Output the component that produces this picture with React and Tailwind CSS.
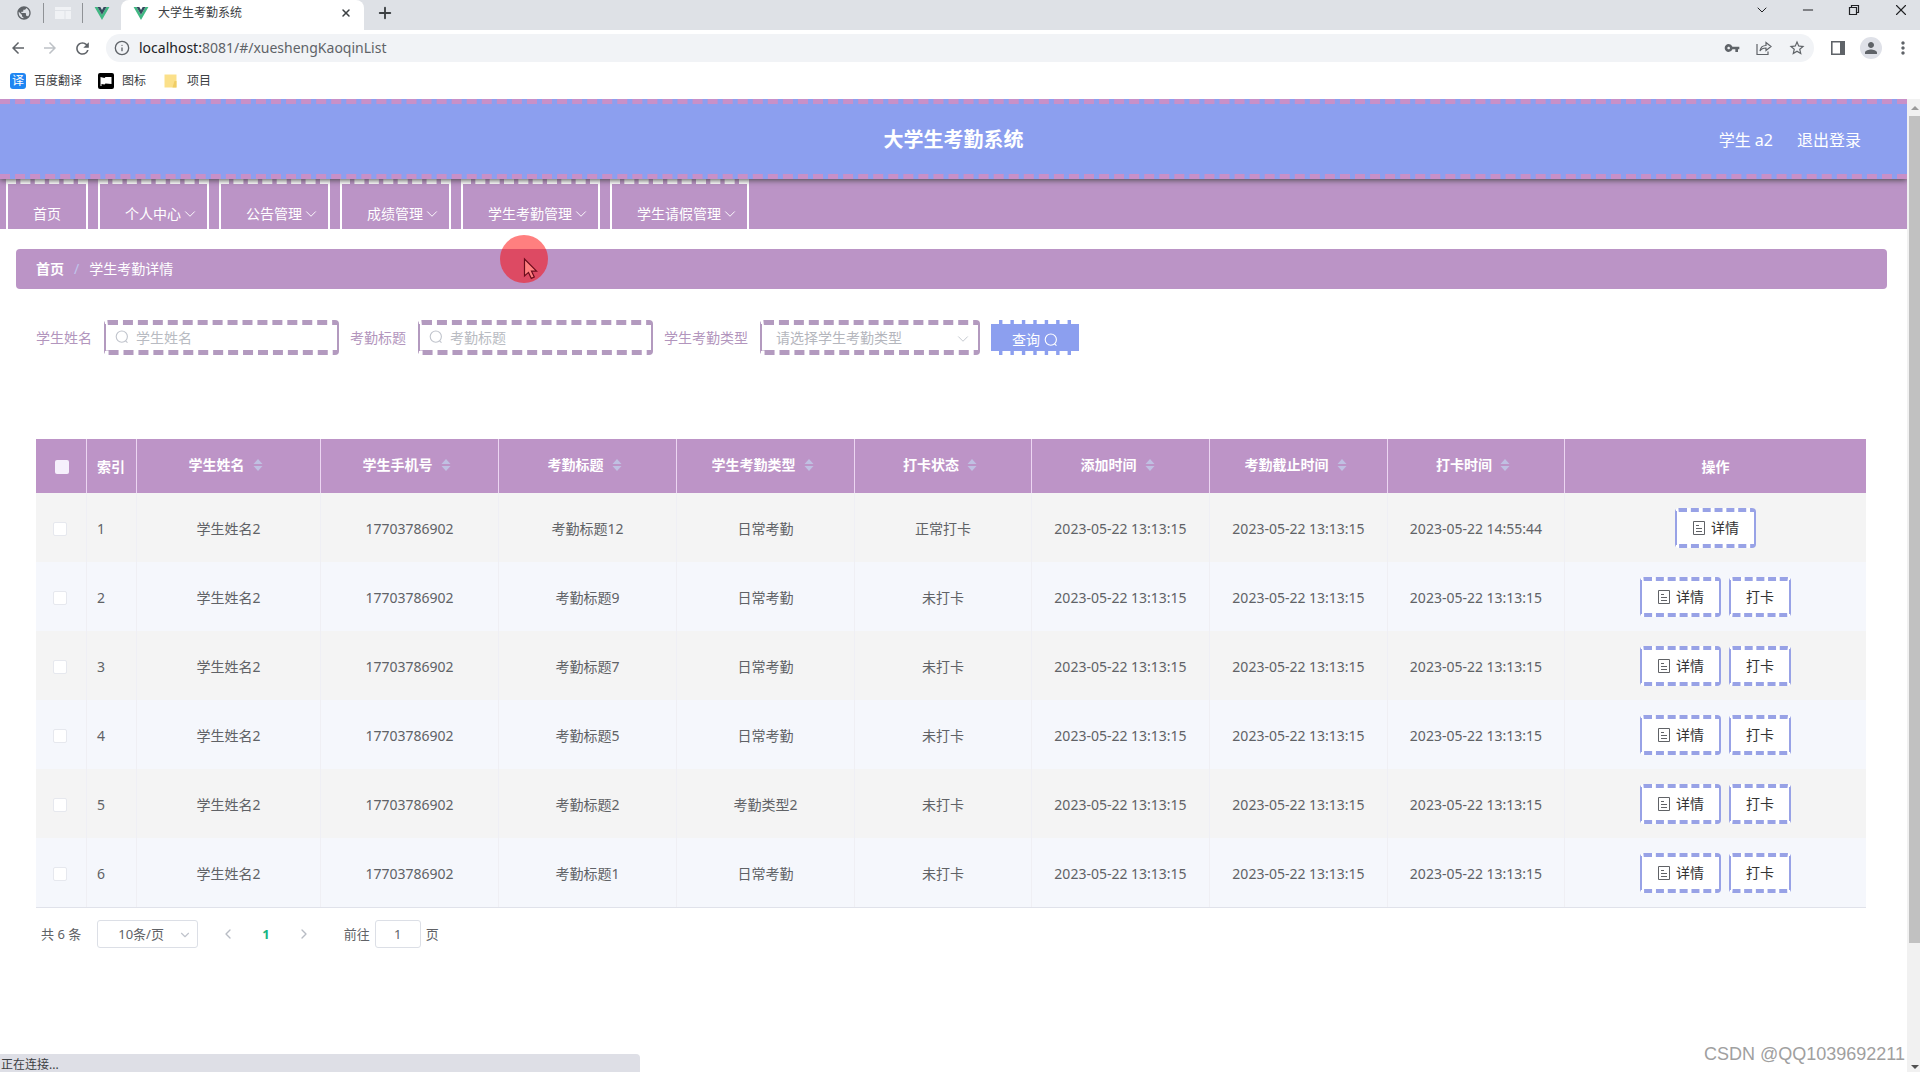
import { useState } from "react";
import { ChevronDown, ChevronLeft, ChevronRight, X, Minus, Plus, Info } from "lucide-react";
import { MdArrowBack, MdArrowForward, MdRefresh, MdVpnKey, MdStarBorder, MdPublic, MdPerson, MdMoreVert } from "react-icons/md";

const menus = [
  { title: "首页" },
  { title: "个人中心", sub: true },
  { title: "公告管理", sub: true },
  { title: "成绩管理", sub: true },
  { title: "学生考勤管理", sub: true },
  { title: "学生请假管理", sub: true },
];

const columns = [
  { label: "学生姓名", prop: "name", width: "w-[184px]" },
  { label: "学生手机号", prop: "phone", width: "w-[178px]" },
  { label: "考勤标题", prop: "title", width: "w-[178px]" },
  { label: "学生考勤类型", prop: "type", width: "w-[178px]" },
  { label: "打卡状态", prop: "status", width: "w-[177px]" },
  { label: "添加时间", prop: "created", width: "w-[178px]" },
  { label: "考勤截止时间", prop: "deadline", width: "w-[178px]" },
  { label: "打卡时间", prop: "clock", width: "w-[177px]" },
];

const time = "2023-05-22 13:13:15";
const base = { name: "学生姓名2", phone: "17703786902", created: time, deadline: time, clock: time };
const rows = [
  { ...base, title: "考勤标题12", type: "日常考勤", status: "正常打卡", clock: "2023-05-22 14:55:44", done: true },
  { ...base, title: "考勤标题9", type: "日常考勤", status: "未打卡" },
  { ...base, title: "考勤标题7", type: "日常考勤", status: "未打卡" },
  { ...base, title: "考勤标题5", type: "日常考勤", status: "未打卡" },
  { ...base, title: "考勤标题2", type: "考勤类型2", status: "未打卡" },
  { ...base, title: "考勤标题1", type: "日常考勤", status: "未打卡" },
];

export default function App() {
  return (
    <div className="relative flex h-screen flex-col overflow-hidden bg-white font-['Noto_Sans','Noto_Sans_CJK_SC',sans-serif] text-sm text-[#606266]">
      <TabStrip />
      <Toolbar />
      <Bookmarks />
      <div className="flex min-h-0 flex-1">
        <div className="min-w-0 flex-1 overflow-hidden">
          <Header />
          <NavMenu />
          <main className="px-4 pt-5">
            <Breadcrumb />
            <SearchForm />
            <AttendanceTable />
            <Pagination />
          </main>
        </div>
        <Scrollbar />
      </div>

      {/* Click highlight and pointer */}
      <div className="absolute top-[235px] left-[500px] size-12 rounded-full bg-[#ff0000]/50">
        <svg viewBox="0 0 48 48" className="size-12">
          <path d="M24.5 24v17l4-3.600 2.800 6 3-1.400-2.800-5.800h5z" fill="#ff8080" stroke="#6b0c1c" strokeWidth="1.200" />
        </svg>
      </div>

      <div className="absolute bottom-0 left-0 h-[18px] w-1/3 rounded-tr bg-[#dedfe6] pl-px text-xs leading-[22px] text-[#3c4043]">
        正在连接...
      </div>
      <div className="absolute right-[15px] bottom-1.5 font-['Liberation_Sans',sans-serif] text-lg leading-6 text-[#a0a0a0]">
        CSDN @QQ1039692211
      </div>
    </div>
  );
}

function TabStrip() {
  return (
    <div className="flex h-[30px] shrink-0 bg-[#dee1e6] text-xs text-[#3c4043]">
      <div className="flex w-[121px] items-center pb-1">
        <MdPublic className="ml-4 size-4 text-[#5f6368]" />
        <span className="ml-[11px] h-5 w-px bg-[#8f9296]" />
        <BlankIcon />
        <span className="ml-[11px] h-5 w-px bg-[#8f9296]" />
        <VueIcon className="ml-[11px] h-[13px] w-4" />
      </div>
      <div className="flex w-[243px] items-center rounded-t-lg bg-white pr-3 pb-1">
        <VueIcon className="ml-3 h-[13px] w-4" />
        <span className="ml-[9px] flex-1">大学生考勤系统</span>
        <button aria-label="关闭标签页">
          <X className="size-3" strokeWidth={3} />
        </button>
      </div>
      <button aria-label="新标签页" className="ml-3 pb-1">
        <Plus className="size-[18px]" strokeWidth={2.5} />
      </button>
      <div className="ml-auto flex items-center gap-[30px] pr-2.5 pb-2.5 text-[#202124]">
        <button aria-label="搜索标签页">
          <ChevronDown className="size-4" strokeWidth={1.5} />
        </button>
        <button aria-label="最小化">
          <Minus className="size-4" strokeWidth={1.5} />
        </button>
        <button aria-label="还原">
          <svg viewBox="0 0 16 16" className="size-4" fill="none" stroke="currentColor" strokeWidth="1.200">
            <path d="M3.500 5.500h7v7h-7zM5.500 5.500v-2h7v7h-2" />
          </svg>
        </button>
        <button aria-label="关闭">
          <X className="size-[18px]" strokeWidth={1.5} />
        </button>
      </div>
    </div>
  );
}

function Toolbar() {
  return (
    <div className="flex h-9 shrink-0 items-center pr-[7px] pl-[9px] text-[#5f6368]">
      <button aria-label="后退">
        <MdArrowBack className="size-[18px]" />
      </button>
      <button aria-label="前进" className="ml-3.5 text-[#bdc1c6]">
        <MdArrowForward className="size-[18px]" />
      </button>
      <button aria-label="刷新" className="ml-3.5">
        <MdRefresh className="size-[19px]" />
      </button>
      <div className="ml-3.5 flex h-7 flex-1 items-center rounded-full bg-[#f1f3f6] pr-2 pl-2">
        <Info className="size-4" />
        <span className="ml-[9px] flex-1 text-sm">
          <span className="text-[#202124]">localhost:</span>8081/#/xueshengKaoqinList
        </span>
        <MdVpnKey className="size-4" />
        <svg viewBox="0 0 16 16" className="ml-4 size-4" fill="none" stroke="currentColor" strokeWidth="1.200">
          <path d="M1 4v10.500h11v-3" />
          <path d="M4 11c.5-4 3-5.500 6-5.500V2.500L15 6.500 10 10.500V8C7.500 8 5.500 8.500 4 11z" />
        </svg>
        <MdStarBorder className="ml-4 size-[18px]" />
      </div>
      <svg viewBox="0 0 16 16" className="ml-4 size-4">
        <path d="M1.800 1.800h12.400v12.400H1.800z" fill="none" stroke="currentColor" strokeWidth="1.600" />
        <path d="M10 1h5v14h-5z" fill="currentColor" />
      </svg>
      <span className="ml-3.5 flex size-[22px] items-center justify-center rounded-full bg-[#dfe1e8]">
        <MdPerson className="size-[18px]" />
      </span>
      <button aria-label="菜单" className="ml-[11px]">
        <MdMoreVert className="size-5" />
      </button>
    </div>
  );
}

function Bookmarks() {
  return (
    <div className="flex h-[33px] shrink-0 items-center pb-1 pl-2.5 text-xs text-[#3c4043]">
      <a href="#fanyi" className="flex items-center gap-2">
        <span className="flex size-4 items-center justify-center rounded-[3px] bg-[#1f86f2] text-xs leading-4 text-white">译</span>
        百度翻译
      </a>
      <a href="#icons" className="ml-4 flex items-center gap-2">
        <svg viewBox="0 0 16 16" className="size-4">
          <rect width="16" height="16" rx="2" fill="#000" />
          <path d="M2.500 13V4l4 1 1-1h6v7l-6-.5-1 1-3-.5v2z" fill="#fff" />
        </svg>
        图标
      </a>
      <a href="#project" className="ml-[18px] flex items-center gap-2.5">
        <svg viewBox="0 0 13 16" className="h-4 w-[13px]">
          <path d="M.5 1.500h12v13H.5z" fill="#fbe08a" />
          <path d="M10.500 8h2v6.500h-4z" fill="#f0cd66" />
        </svg>
        项目
      </a>
    </div>
  );
}

function Header() {
  return (
    <header className="relative z-10 grid h-20 grid-cols-3 items-center border-y-[5px] border-dashed border-[#c890c8] bg-[#8c9fef] pt-0.5 text-white shadow-[0_1px_6px_#444]">
      <h1 className="col-start-2 text-center text-xl font-bold">大学生考勤系统</h1>
      <div className="flex justify-end gap-6 pr-[46px] text-base">
        <span>学生 a2</span>
        <a href="#logout">退出登录</a>
      </div>
    </header>
  );
}

function NavMenu() {
  return (
    <nav className="flex h-[50px] gap-2.5 bg-[#bb94c6] pl-1.5 text-white">
      {menus.map((menu) => (
        <a
          key={menu.title}
          href="#menu"
          className={`flex items-center border-x-2 border-t-[5px] border-white pt-[15px] pl-[25px] [border-style:dashed_solid] ${menu.sub ? "pr-2" : "pr-[25px]"}`}
        >
          {menu.title}
          {menu.sub && <ChevronDown className="size-[18px]" strokeWidth={1.25} />}
        </a>
      ))}
    </nav>
  );
}

function Breadcrumb() {
  return (
    <div className="mr-1 flex h-10 items-center rounded bg-[#bb94c6] px-5 text-white">
      <a href="#home" className="font-bold">首页</a>
      <span className="mx-2.5 text-[#c0c4ec]">/</span>
      <span>学生考勤详情</span>
    </div>
  );
}

function SearchForm() {
  return (
    <form className="mt-[31px] ml-5 flex h-[35px] items-center text-[#b295bd]" onSubmit={(e) => e.preventDefault()}>
      <SearchInput id="name" label="学生姓名" />
      <SearchInput id="title" label="考勤标题" />
      <label htmlFor="type">学生考勤类型</label>
      <div className="relative ml-3 h-[35px] w-[220px]">
        <select
          id="type"
          className="h-full w-full appearance-none rounded border-x-2 border-y-[5px] border-[#b39abf] bg-white pl-3.5 text-[#b4b6bd] [border-style:dashed_solid]"
        >
          <option>请选择学生考勤类型</option>
          <option>日常考勤</option>
          <option>考勤类型2</option>
        </select>
        <ChevronDown className="pointer-events-none absolute top-2.5 right-2 size-[18px] text-[#c0c4cc]" strokeWidth={1.25} />
      </div>
      <button
        type="submit"
        className="ml-[11px] flex h-[35px] w-[88px] items-center justify-center gap-1 border-y-4 border-dashed border-white bg-[#8c9fef] pt-1 text-white"
      >
        查询
        <SearchIcon className="size-3.5" />
      </button>
    </form>
  );
}

function SearchInput({ id, label }) {
  return (
    <div className="mr-[11px] flex items-center">
      <label htmlFor={id}>{label}</label>
      <div className="relative ml-3 h-[35px] w-[235px]">
        <input
          id={id}
          placeholder={label}
          className="h-full w-full rounded border-x-2 border-y-[5px] border-[#b39abf] bg-white pl-[30px] [border-style:dashed_solid] placeholder:text-[#b8bbc2]"
        />
        <SearchIcon className="absolute top-2.5 left-[11px] size-3.5 text-[#c0c4cc]" />
      </div>
    </div>
  );
}

function AttendanceTable() {
  const [checked, setChecked] = useState([]);

  const toggle = (i) => {
    setChecked(checked.includes(i) ? checked.filter((c) => c !== i) : [...checked, i]);
  };

  const toggleAll = () => {
    setChecked(checked.length === rows.length ? [] : rows.map((_, i) => i));
  };

  return (
    <div className="mt-[84px] mr-[25px] ml-5">
      <table className="w-full table-fixed border-separate border-spacing-0 border-b border-[#e0e2ea] text-center">
        <thead className="bg-[#bd94c7] text-white">
          <tr className="h-[54px]">
            <th className="w-[51px] border-r border-[#ecd6f2] pl-0.5">
              <input
                type="checkbox"
                aria-label="全选"
                checked={checked.length === rows.length}
                onChange={toggleAll}
                className="size-3.5 appearance-none rounded-xs bg-[#f6f0fc] align-middle checked:bg-[#8c9fef]"
              />
            </th>
            <th className="w-[50px] border-r border-[#ecd6f2] pt-0.5 pl-2.5 text-left font-bold">索引</th>
            {columns.map((col) => (
              <th key={col.prop} className={`border-r border-[#ecd6f2] pb-0.5 font-bold ${col.width}`}>
                <button className="inline-flex items-center font-bold">
                  {col.label}
                  <SortIcon />
                </button>
              </th>
            ))}
            <th className="pt-0.5 font-bold">操作</th>
          </tr>
        </thead>
        <tbody>
          {rows.map((row, i) => (
            <tr key={row.title} className="h-[69px] odd:bg-[#f4f4f4] even:bg-[#f5f7fc]">
              <td className="border-r border-[#efeff4] pr-0.5">
                <input
                  type="checkbox"
                  aria-label={`选择 ${row.title}`}
                  checked={checked.includes(i)}
                  onChange={() => toggle(i)}
                  className="size-3.5 appearance-none rounded-xs border border-[#e6e8ee] bg-white align-middle checked:bg-[#8c9fef]"
                />
              </td>
              <td className="border-r border-[#efeff4] pt-0.5 pl-2.5 text-left">{i + 1}</td>
              {columns.map((col) => (
                <td key={col.prop} className="border-r border-[#efeff4] pt-0.5">{row[col.prop]}</td>
              ))}
              <td>
                <div className="flex justify-center gap-2">
                  <ActionButton>
                    <DocumentIcon />
                    详情
                  </ActionButton>
                  {!row.done && <ActionButton>打卡</ActionButton>}
                </div>
              </td>
            </tr>
          ))}
        </tbody>
      </table>
    </div>
  );
}

function ActionButton({ children }) {
  return (
    <button className="flex h-10 items-center gap-[5px] rounded border-x-2 border-y-4 border-[#98a2e6] bg-white px-[15px] text-[#333] [border-style:dashed_solid]">
      {children}
    </button>
  );
}

function Pagination() {
  return (
    <div className="mt-3 ml-[25px] flex h-7 items-center text-[13px]">
      <span>共 6 条</span>
      <div className="relative ml-4 h-7 w-[101px]">
        <select aria-label="每页条数" className="h-full w-full appearance-none rounded-[3px] border border-[#dcdfe6] pl-5">
          <option>10条/页</option>
          <option>20条/页</option>
        </select>
        <ChevronDown className="pointer-events-none absolute top-2 right-1.5 size-3.5 text-[#c0c4cc]" />
      </div>
      <button aria-label="上一页" className="ml-[22px] text-[#b8bcc4]">
        <ChevronLeft className="size-4" strokeWidth={2} />
      </button>
      <button className="mx-[26px] font-bold text-[#18b583]">1</button>
      <button aria-label="下一页" className="text-[#b8bcc4]">
        <ChevronRight className="size-4" strokeWidth={2} />
      </button>
      <label htmlFor="page" className="ml-8">前往</label>
      <input id="page" defaultValue="1" className="mx-[5px] h-7 w-[46px] rounded-[3px] border border-[#dcdfe6] text-center" />
      <span>页</span>
    </div>
  );
}

function Scrollbar() {
  return (
    <div className="flex w-[13px] flex-col items-center bg-[#f1f1f1] pl-0.5">
      <svg viewBox="0 0 10 17" className="h-[17px] w-2.5 shrink-0">
        <path d="M1 11l4-4 4 4z" fill="#9a9a9a" />
      </svg>
      <div className="h-[85%] w-full bg-[#c1c1c1]" />
      <svg viewBox="0 0 10 12" className="mt-auto h-3 w-2.5 shrink-0">
        <path d="M1 5h8l-4 4z" fill="#505050" />
      </svg>
    </div>
  );
}

function SortIcon() {
  return (
    <svg viewBox="0 0 24 14" className="h-3.5 w-6" fill="#c0c0e2">
      <path d="M8.500 6l4.500-5 4.500 5zM8.500 8l4.500 5 4.500-5z" />
    </svg>
  );
}

function SearchIcon({ className }) {
  return (
    <svg viewBox="0 0 14 14" className={className} fill="none" stroke="currentColor" strokeWidth="1.100">
      <circle cx="6.800" cy="6.600" r="5.600" />
      <path d="M10.500 10.800l2 1.900" />
    </svg>
  );
}

function DocumentIcon() {
  return (
    <svg viewBox="0 0 14 14" className="size-3.5" fill="none" stroke="#606266" strokeWidth="1">
      <path d="M1.500.5h11v13h-11zM4 4.500h3M4 7.500h6M4 10.500h6" />
    </svg>
  );
}

function VueIcon({ className }) {
  return (
    <svg viewBox="0 0 16 14" className={className}>
      <path d="M0 0h3.200L8 8.300 12.800 0H16L8 14z" fill="#41b883" />
      <path d="M3.200 0h3L8 3.200 9.800 0h3L8 8.300z" fill="#35495e" />
    </svg>
  );
}

function BlankIcon() {
  return (
    <svg viewBox="0 0 16 12" className="ml-[11px] h-3 w-4">
      <path d="M0 0h16v12H0z" fill="#f0f2f5" />
      <path d="M0 3.500h16M10 3.500V12" stroke="#dfe2e7" />
    </svg>
  );
}
